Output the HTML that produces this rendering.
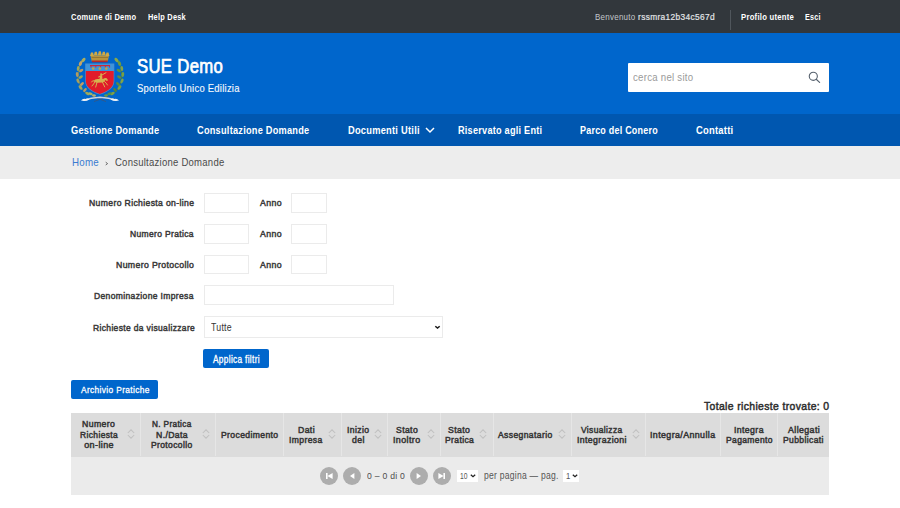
<!DOCTYPE html>
<html><head><meta charset="utf-8">
<style>
*{margin:0;padding:0;box-sizing:border-box}
html,body{width:900px;height:508px;overflow:hidden;background:#fff;font-family:"Liberation Sans",sans-serif}
.a{position:absolute}
.t{position:absolute;white-space:nowrap;transform-origin:0 0}
.inp{position:absolute;border:1px solid #ebebeb;background:#fff}
.circ{position:absolute;width:18px;height:18px;border-radius:50%;background:#adadad}
.sep{position:absolute;top:413px;height:43px;width:1px;background:#e6e6e6}
.sort{position:absolute;top:429px;width:8px;height:10px}
</style></head><body>
<div class="a" style="left:0;top:0;width:900px;height:33px;background:#32373c"></div>
<div class="a" style="left:0;top:33px;width:900px;height:81px;background:#0066cc"></div>
<div class="a" style="left:0;top:114px;width:900px;height:32px;background:#0057b0"></div>
<div class="a" style="left:0;top:146px;width:900px;height:33px;background:#ededed"></div>

<div class="a" style="left:730px;top:10px;width:1px;height:20px;background:#50565c"></div>

<!-- logo -->
<svg class="a" style="left:72px;top:46px" width="56" height="60" viewBox="0 0 56 60">
 <path d="M15 48.5 Q7 41 6 31 Q5.8 21 10.5 13" fill="none" stroke="#7a8a46" stroke-width="0.8"/>
 <path d="M41 48.5 Q49 41 50 31 Q50.2 21 45.5 13" fill="none" stroke="#4d7a3c" stroke-width="0.8"/>
 <g>
  <ellipse cx="11.5" cy="14" rx="1.5" ry="2.6" transform="rotate(40 11.5 14)" fill="#a9ad60"/>
  <ellipse cx="8.5" cy="17.5" rx="1.5" ry="2.6" transform="rotate(25 8.5 17.5)" fill="#c2a46a"/>
  <ellipse cx="6.2" cy="22.5" rx="1.4" ry="2.5" transform="rotate(5 6.2 22.5)" fill="#a0a85a"/>
  <ellipse cx="9.2" cy="24.5" rx="1.3" ry="2.3" transform="rotate(60 9.2 24.5)" fill="#b69a66"/>
  <ellipse cx="5.2" cy="28.5" rx="1.4" ry="2.5" transform="rotate(-8 5.2 28.5)" fill="#b09a62"/>
  <ellipse cx="8.8" cy="31" rx="1.3" ry="2.3" transform="rotate(60 8.8 31)" fill="#9aa85a"/>
  <ellipse cx="6" cy="35" rx="1.4" ry="2.5" transform="rotate(-25 6 35)" fill="#a8a05e"/>
  <ellipse cx="10" cy="38" rx="1.3" ry="2.3" transform="rotate(50 10 38)" fill="#c09a6a"/>
  <ellipse cx="8.5" cy="41.5" rx="1.4" ry="2.5" transform="rotate(-40 8.5 41.5)" fill="#a4a45c"/>
  <ellipse cx="13" cy="44" rx="1.3" ry="2.3" transform="rotate(40 13 44)" fill="#b49866"/>
  <ellipse cx="15.5" cy="47.5" rx="1.3" ry="2.4" transform="rotate(-60 15.5 47.5)" fill="#9ea85a"/>
 </g>
 <g>
  <ellipse cx="44.5" cy="14" rx="1.5" ry="2.6" transform="rotate(-40 44.5 14)" fill="#88a84a"/>
  <ellipse cx="47.5" cy="17.5" rx="1.5" ry="2.6" transform="rotate(-25 47.5 17.5)" fill="#6a9a44"/>
  <ellipse cx="49.8" cy="22.5" rx="1.4" ry="2.5" transform="rotate(-5 49.8 22.5)" fill="#82a448"/>
  <ellipse cx="46.8" cy="24.5" rx="1.3" ry="2.3" transform="rotate(-60 46.8 24.5)" fill="#5e9040"/>
  <ellipse cx="50.8" cy="28.5" rx="1.4" ry="2.5" transform="rotate(8 50.8 28.5)" fill="#76a046"/>
  <ellipse cx="47.2" cy="31" rx="1.3" ry="2.3" transform="rotate(-60 47.2 31)" fill="#5a8c40"/>
  <ellipse cx="50" cy="35" rx="1.4" ry="2.5" transform="rotate(25 50 35)" fill="#80a448"/>
  <ellipse cx="46" cy="38" rx="1.3" ry="2.3" transform="rotate(-50 46 38)" fill="#5a8a40"/>
  <ellipse cx="47.5" cy="41.5" rx="1.4" ry="2.5" transform="rotate(40 47.5 41.5)" fill="#7aa046"/>
  <ellipse cx="43" cy="44" rx="1.3" ry="2.3" transform="rotate(-40 43 44)" fill="#4f8240"/>
  <ellipse cx="40.5" cy="47.5" rx="1.3" ry="2.4" transform="rotate(60 40.5 47.5)" fill="#7ea048"/>
 </g>
 <!-- crown -->
 <path d="M18.5 9.5 L37 9.5 L35.8 15.2 L19.7 15.2 Z" fill="#b8943c"/>
 <g fill="#cfa945">
  <path d="M18 10 L19 6.5 L21 6.5 L22 10 Z"/><path d="M21.8 9.5 L22.8 5.8 L24.8 5.8 L25.8 9.5 Z"/><path d="M25.8 9.5 L26.8 5.3 L28.8 5.3 L29.8 9.5 Z"/><path d="M29.8 9.5 L30.8 5.8 L32.8 5.8 L33.8 9.5 Z"/><path d="M33.5 10 L34.5 6.5 L36.5 6.5 L37.5 10 Z"/>
 </g>
 <path d="M19.5 11.5 L36 11.5" stroke="#8d7030" stroke-width="0.8"/>
 <path d="M19.7 14.6 L35.8 14.6 L35.4 16.3 L20.1 16.3 Z" fill="#b22a2c"/>
 <!-- shield -->
 <path d="M13.2 17.6 L42.3 17.6 L42.3 35 Q42.2 44.2 27.8 48.6 Q13.3 44.2 13.2 35 Z" fill="#4a90d0"/>
 <path d="M13.8 25 L41.7 25 L41.7 35 Q41.6 43.6 27.8 47.9 Q13.9 43.6 13.8 35 Z" fill="#e11b2b"/>
 <path d="M14 18.3 L41.5 18.3 L41.5 25 L14 25 Z" fill="#3f95da"/>
 <path d="M18 19.6 L38 19.6" stroke="#c8283c" stroke-width="1.2"/>
 <path d="M19 19.5 L19 21.6 M23.8 19.5 L23.8 21.6 M28.6 19.5 L28.6 21.6 M33.4 19.5 L33.4 21.6 M37.6 19.5 L37.6 21.6" stroke="#c8283c" stroke-width="0.9"/>
 <circle cx="21.2" cy="22.6" r="1.3" fill="#c9a43e"/><circle cx="27.8" cy="22.6" r="1.3" fill="#c9a43e"/><circle cx="34.3" cy="22.6" r="1.3" fill="#c9a43e"/>
 <!-- horseman -->
 <g transform="translate(0.5 1.5)"><g fill="#d6b24e">
  <path d="M21 33.5 Q22.5 31.2 26 31.6 L30.5 31.6 Q32.5 30 34.2 30.8 L35.6 32.8 L34.2 33.4 L33 32.6 Q31.5 34.8 30 35 L24.5 35.2 Q22.5 35 21 33.5 Z"/>
  <path d="M27 31.8 L27.4 28.2 L29.6 27.8 L30 31.8 Z"/>
  <circle cx="28.6" cy="26.8" r="1"/>
 </g>
 <g fill="none" stroke="#d6b24e" stroke-width="1" stroke-linecap="round">
  <path d="M22.5 34 Q21.5 36.5 19.5 38.5 M24.5 34.8 L23.2 39.6 M30 34.6 L32.2 39.4 M32 34 Q34 35.5 35 37.5"/>
  <path d="M26 29.5 L33.5 25.2"/>
  <path d="M21 33.2 Q19.6 33 19 34.5"/>
 </g></g>
 <!-- ribbon -->
 <path d="M20 50.5 L34 55.5 M36 50.5 L22 55.5" fill="none" stroke="#3c5478" stroke-width="0.8"/>
 <path d="M11.5 54.2 Q19 51.6 28 51.2 Q37 51.6 44.5 54.2" fill="none" stroke="#c9d2dc" stroke-width="1.5"/>
 <path d="M9 54.6 Q11 52.2 13.5 53 Q15.5 51.8 17.5 53.4 Q14 55.6 9 54.6 Z" fill="#eef2f6"/>
 <path d="M47 54.6 Q45 52.2 42.5 53 Q40.5 51.8 38.5 53.4 Q42 55.6 47 54.6 Z" fill="#eef2f6"/>
 <ellipse cx="18.5" cy="47.8" rx="1.3" ry="2.2" transform="rotate(-70 18.5 47.8)" fill="#a8b060"/>
 <ellipse cx="22" cy="49.5" rx="1.2" ry="2" transform="rotate(-80 22 49.5)" fill="#b8b070"/>
 <ellipse cx="37.5" cy="47.8" rx="1.3" ry="2.2" transform="rotate(70 37.5 47.8)" fill="#5a9040"/>
 <ellipse cx="34" cy="49.5" rx="1.2" ry="2" transform="rotate(80 34 49.5)" fill="#6a9a44"/>
</svg>


<!-- search -->
<div class="a" style="left:627.5px;top:62.5px;width:201.5px;height:29.5px;background:#fff;border-radius:1px"></div>
<svg class="a" style="left:806px;top:70px" width="16" height="16" viewBox="0 0 16 16"><circle cx="7.3" cy="6.3" r="4.05" fill="none" stroke="#56616d" stroke-width="1.1"/><path d="M10.2 9.2 L13.6 12.4" stroke="#56616d" stroke-width="1.2" stroke-linecap="round"/></svg>

<!-- nav chevron -->
<svg class="a" style="left:423.6px;top:124.6px" width="12" height="10" viewBox="0 0 12 10"><path d="M2 3 L6 7 L10 3" fill="none" stroke="#fff" stroke-width="1.5"/></svg>

<!-- breadcrumb sep -->
<svg class="a" style="left:104px;top:161px" width="5" height="5" viewBox="0 0 5 5"><path d="M1.7 1.2 L3.6 2.6 L1.7 4" fill="none" stroke="#5a5a5a" stroke-width="0.9"/></svg>

<!-- form inputs -->
<div class="inp" style="left:204px;top:193px;width:45px;height:19.5px"></div>
<div class="inp" style="left:290.5px;top:193px;width:36.5px;height:19.5px"></div>
<div class="inp" style="left:204px;top:224px;width:45px;height:19.5px"></div>
<div class="inp" style="left:290.5px;top:224px;width:36.5px;height:19.5px"></div>
<div class="inp" style="left:204px;top:254.5px;width:45px;height:19.5px"></div>
<div class="inp" style="left:290.5px;top:254.5px;width:36.5px;height:19.5px"></div>
<div class="inp" style="left:204px;top:285.3px;width:190px;height:19.5px"></div>
<div class="inp" style="left:204px;top:316.4px;width:239px;height:21.2px"></div>
<svg class="a" style="left:432.5px;top:323px" width="9" height="8" viewBox="0 0 9 8"><path d="M2.3 3.2 L4.5 5.1 L6.7 3.2" fill="none" stroke="#1a1a1a" stroke-width="1.5"/></svg>

<!-- buttons -->
<div class="a" style="left:203px;top:349.1px;width:65.8px;height:19.2px;background:#0066cc;border-radius:2px"></div>
<div class="a" style="left:71px;top:380px;width:87px;height:19px;background:#0066cc;border-radius:2px"></div>

<!-- table -->
<div class="a" style="left:71px;top:413px;width:758px;height:43.5px;background:#dcdcdc"></div>
<div class="a" style="left:71px;top:456.5px;width:758px;height:38px;background:#ebebeb"></div>
<div class="sep" style="left:140.1px"></div>
<div class="sep" style="left:215.1px"></div>
<div class="sep" style="left:283.1px"></div>
<div class="sep" style="left:340.8px"></div>
<div class="sep" style="left:386.9px"></div>
<div class="sep" style="left:439.5px"></div>
<div class="sep" style="left:492.7px"></div>
<div class="sep" style="left:570.8px"></div>
<div class="sep" style="left:644.7px"></div>
<div class="sep" style="left:719.7px"></div>
<div class="sep" style="left:776.8px"></div>
<svg class="sort" style="left:127.2px" width="8" height="10" viewBox="0 0 8 10"><path d="M0.8 4 L4 0.8 L7.2 4 M0.8 6 L4 9.2 L7.2 6" fill="none" stroke="#c0c0c0" stroke-width="1.05"/></svg>
<svg class="sort" style="left:202.0px" width="8" height="10" viewBox="0 0 8 10"><path d="M0.8 4 L4 0.8 L7.2 4 M0.8 6 L4 9.2 L7.2 6" fill="none" stroke="#c0c0c0" stroke-width="1.05"/></svg>
<svg class="sort" style="left:327.6px" width="8" height="10" viewBox="0 0 8 10"><path d="M0.8 4 L4 0.8 L7.2 4 M0.8 6 L4 9.2 L7.2 6" fill="none" stroke="#c0c0c0" stroke-width="1.05"/></svg>
<svg class="sort" style="left:374.2px" width="8" height="10" viewBox="0 0 8 10"><path d="M0.8 4 L4 0.8 L7.2 4 M0.8 6 L4 9.2 L7.2 6" fill="none" stroke="#c0c0c0" stroke-width="1.05"/></svg>
<svg class="sort" style="left:426.6px" width="8" height="10" viewBox="0 0 8 10"><path d="M0.8 4 L4 0.8 L7.2 4 M0.8 6 L4 9.2 L7.2 6" fill="none" stroke="#c0c0c0" stroke-width="1.05"/></svg>
<svg class="sort" style="left:479.4px" width="8" height="10" viewBox="0 0 8 10"><path d="M0.8 4 L4 0.8 L7.2 4 M0.8 6 L4 9.2 L7.2 6" fill="none" stroke="#c0c0c0" stroke-width="1.05"/></svg>
<svg class="sort" style="left:558.2px" width="8" height="10" viewBox="0 0 8 10"><path d="M0.8 4 L4 0.8 L7.2 4 M0.8 6 L4 9.2 L7.2 6" fill="none" stroke="#c0c0c0" stroke-width="1.05"/></svg>
<svg class="sort" style="left:631.6px" width="8" height="10" viewBox="0 0 8 10"><path d="M0.8 4 L4 0.8 L7.2 4 M0.8 6 L4 9.2 L7.2 6" fill="none" stroke="#c0c0c0" stroke-width="1.05"/></svg>

<!-- pagination -->
<div class="circ" style="left:320px;top:466.5px"></div>
<div class="circ" style="left:343px;top:466.5px"></div>
<div class="circ" style="left:410.4px;top:466.5px"></div>
<div class="circ" style="left:433px;top:466.5px"></div>
<svg class="a" style="left:320px;top:466.5px" width="18" height="18" viewBox="0 0 18 18"><rect x="6" y="6" width="1.6" height="6" fill="#fff"/><path d="M7.4 9 L12.6 6 L12.6 12 Z" fill="#fff"/></svg>
<svg class="a" style="left:343px;top:466.5px" width="18" height="18" viewBox="0 0 18 18"><path d="M7 9 L11.4 6 L11.4 12 Z" fill="#fff"/></svg>
<svg class="a" style="left:410.4px;top:466.5px" width="18" height="18" viewBox="0 0 18 18"><path d="M11 9 L6.6 6 L6.6 12 Z" fill="#fff"/></svg>
<svg class="a" style="left:433px;top:466.5px" width="18" height="18" viewBox="0 0 18 18"><path d="M10.6 9 L5.4 6 L5.4 12 Z" fill="#fff"/><rect x="10.4" y="6" width="1.6" height="6" fill="#fff"/></svg>
<div class="a" style="left:457px;top:470px;width:21px;height:12px;background:#fff"></div>
<svg class="a" style="left:468.5px;top:471px" width="8" height="8" viewBox="0 0 8 8"><path d="M1.8 3.8 L4 5.7 L6.2 3.8" fill="none" stroke="#222" stroke-width="1.3"/></svg>
<div class="a" style="left:562.7px;top:470px;width:16.3px;height:12px;background:#fff"></div>
<svg class="a" style="left:570.8px;top:471px" width="8" height="8" viewBox="0 0 8 8"><path d="M1.8 3.8 L4 5.7 L6.2 3.8" fill="none" stroke="#222" stroke-width="1.3"/></svg>

<div class="t" style="left:70.90px;top:12.00px;font-size:9.30px;line-height:11px;color:#ffffff;font-weight:700;letter-spacing:0.3px;transform:scaleX(0.810)">Comune di Demo</div>
<div class="t" style="left:147.90px;top:12.00px;font-size:9.30px;line-height:11px;color:#ffffff;font-weight:700;letter-spacing:0.3px;transform:scaleX(0.797)">Help Desk</div>
<div class="t" style="left:595.00px;top:11.90px;font-size:9.30px;line-height:11px;color:#c3c6ca;letter-spacing:0.3px;transform:scaleX(0.857)">Benvenuto</div>
<div class="t" style="left:637.70px;top:11.90px;font-size:9.30px;line-height:11px;color:#e4e6e8;-webkit-text-stroke:0.2px currentColor;letter-spacing:0.4px;transform:scaleX(0.896)">rssmra12b34c567d</div>
<div class="t" style="left:740.60px;top:11.90px;font-size:9.30px;line-height:11px;color:#ffffff;font-weight:700;letter-spacing:0.3px;transform:scaleX(0.828)">Profilo utente</div>
<div class="t" style="left:805.00px;top:11.90px;font-size:9.30px;line-height:11px;color:#ffffff;font-weight:700;letter-spacing:0.3px;transform:scaleX(0.772)">Esci</div>
<div class="t" style="left:137.00px;top:54.80px;font-size:19.42px;line-height:23px;color:#ffffff;-webkit-text-stroke:0.7px currentColor;letter-spacing:0.4px;transform:scaleX(0.860)">SUE Demo</div>
<div class="t" style="left:137.00px;top:81.60px;font-size:11.16px;line-height:13px;color:#f4f8fc;-webkit-text-stroke:0.15px currentColor;letter-spacing:0.3px;transform:scaleX(0.847)">Sportello Unico Edilizia</div>
<div class="t" style="left:633.20px;top:69.90px;font-size:11.59px;line-height:14px;color:#9a9a9a;letter-spacing:0.3px;transform:scaleX(0.834)">cerca nel sito</div>
<div class="t" style="left:71.10px;top:122.60px;font-size:11.30px;line-height:14px;color:#ffffff;font-weight:700;letter-spacing:0.3px;transform:scaleX(0.820)">Gestione Domande</div>
<div class="t" style="left:197.00px;top:122.60px;font-size:11.30px;line-height:14px;color:#ffffff;font-weight:700;letter-spacing:0.3px;transform:scaleX(0.814)">Consultazione Domande</div>
<div class="t" style="left:348.00px;top:122.60px;font-size:11.30px;line-height:14px;color:#ffffff;font-weight:700;letter-spacing:0.3px;transform:scaleX(0.822)">Documenti Utili</div>
<div class="t" style="left:458.30px;top:122.60px;font-size:11.30px;line-height:14px;color:#ffffff;font-weight:700;letter-spacing:0.3px;transform:scaleX(0.809)">Riservato agli Enti</div>
<div class="t" style="left:580.30px;top:122.60px;font-size:11.30px;line-height:14px;color:#ffffff;font-weight:700;letter-spacing:0.3px;transform:scaleX(0.792)">Parco del Conero</div>
<div class="t" style="left:696.00px;top:122.60px;font-size:11.30px;line-height:14px;color:#ffffff;font-weight:700;letter-spacing:0.3px;transform:scaleX(0.831)">Contatti</div>
<div class="t" style="left:71.70px;top:155.10px;font-size:11.74px;line-height:14px;color:#3a7bd0;letter-spacing:0.3px;transform:scaleX(0.831)">Home</div>
<div class="t" style="left:115.00px;top:155.10px;font-size:11.74px;line-height:14px;color:#4a4a4a;letter-spacing:0.3px;transform:scaleX(0.812)">Consultazione Domande</div>
<div class="t" style="left:89.20px;top:197.30px;font-size:9.70px;line-height:12px;color:#3a3a3a;-webkit-text-stroke:0.5px currentColor;letter-spacing:0.4px;transform:scaleX(0.890)">Numero Richiesta on-line</div>
<div class="t" style="left:259.80px;top:197.30px;font-size:9.70px;line-height:12px;color:#3a3a3a;-webkit-text-stroke:0.5px currentColor;letter-spacing:0.4px;transform:scaleX(0.905)">Anno</div>
<div class="t" style="left:129.70px;top:228.10px;font-size:9.70px;line-height:12px;color:#3a3a3a;-webkit-text-stroke:0.5px currentColor;letter-spacing:0.4px;transform:scaleX(0.877)">Numero Pratica</div>
<div class="t" style="left:259.80px;top:228.10px;font-size:9.70px;line-height:12px;color:#3a3a3a;-webkit-text-stroke:0.5px currentColor;letter-spacing:0.4px;transform:scaleX(0.905)">Anno</div>
<div class="t" style="left:116.30px;top:258.90px;font-size:9.70px;line-height:12px;color:#3a3a3a;-webkit-text-stroke:0.5px currentColor;letter-spacing:0.4px;transform:scaleX(0.899)">Numero Protocollo</div>
<div class="t" style="left:259.80px;top:258.90px;font-size:9.70px;line-height:12px;color:#3a3a3a;-webkit-text-stroke:0.5px currentColor;letter-spacing:0.4px;transform:scaleX(0.905)">Anno</div>
<div class="t" style="left:94.00px;top:289.90px;font-size:9.70px;line-height:12px;color:#3a3a3a;-webkit-text-stroke:0.5px currentColor;letter-spacing:0.4px;transform:scaleX(0.880)">Denominazione Impresa</div>
<div class="t" style="left:92.50px;top:321.60px;font-size:9.70px;line-height:12px;color:#3a3a3a;-webkit-text-stroke:0.5px currentColor;letter-spacing:0.4px;transform:scaleX(0.876)">Richieste da visualizzare</div>
<div class="t" style="left:211.10px;top:321.00px;font-size:10.43px;line-height:13px;color:#333333;letter-spacing:0.3px;transform:scaleX(0.840)">Tutte</div>
<div class="t" style="left:212.90px;top:353.50px;font-size:10.00px;line-height:12px;color:#ffffff;-webkit-text-stroke:0.3px currentColor;letter-spacing:0.4px;transform:scaleX(0.827)">Applica filtri</div>
<div class="t" style="left:80.80px;top:383.80px;font-size:9.71px;line-height:12px;color:#ffffff;-webkit-text-stroke:0.3px currentColor;letter-spacing:0.4px;transform:scaleX(0.863)">Archivio Pratiche</div>
<div class="t" style="left:704.20px;top:398.70px;font-size:11.52px;line-height:14px;color:#2e2e2e;-webkit-text-stroke:0.5px currentColor;letter-spacing:0.4px;transform:scaleX(0.904)">Totale richieste trovate: 0</div>
<div class="t" style="left:82.40px;top:419.10px;font-size:9.00px;line-height:11px;color:#363636;-webkit-text-stroke:0.5px currentColor;letter-spacing:0.4px;transform:scaleX(0.968)">Numero</div>
<div class="t" style="left:80.00px;top:429.80px;font-size:9.00px;line-height:11px;color:#363636;-webkit-text-stroke:0.5px currentColor;letter-spacing:0.4px;transform:scaleX(0.938)">Richiesta</div>
<div class="t" style="left:84.20px;top:440.00px;font-size:9.00px;line-height:11px;color:#363636;-webkit-text-stroke:0.5px currentColor;letter-spacing:0.4px;transform:scaleX(1.000)">on-line</div>
<div class="t" style="left:152.00px;top:419.10px;font-size:9.00px;line-height:11px;color:#363636;-webkit-text-stroke:0.5px currentColor;letter-spacing:0.4px;transform:scaleX(0.912)">N. Pratica</div>
<div class="t" style="left:155.60px;top:429.80px;font-size:9.00px;line-height:11px;color:#363636;-webkit-text-stroke:0.5px currentColor;letter-spacing:0.4px;transform:scaleX(0.963)">N./Data</div>
<div class="t" style="left:150.80px;top:440.00px;font-size:9.00px;line-height:11px;color:#363636;-webkit-text-stroke:0.5px currentColor;letter-spacing:0.4px;transform:scaleX(0.945)">Protocollo</div>
<div class="t" style="left:221.20px;top:430.00px;font-size:9.00px;line-height:11px;color:#363636;-webkit-text-stroke:0.5px currentColor;letter-spacing:0.4px;transform:scaleX(0.953)">Procedimento</div>
<div class="t" style="left:297.50px;top:424.70px;font-size:9.00px;line-height:11px;color:#363636;-webkit-text-stroke:0.5px currentColor;letter-spacing:0.4px;transform:scaleX(0.965)">Dati</div>
<div class="t" style="left:288.80px;top:435.00px;font-size:9.00px;line-height:11px;color:#363636;-webkit-text-stroke:0.5px currentColor;letter-spacing:0.4px;transform:scaleX(0.951)">Impresa</div>
<div class="t" style="left:346.80px;top:424.70px;font-size:9.00px;line-height:11px;color:#363636;-webkit-text-stroke:0.5px currentColor;letter-spacing:0.4px;transform:scaleX(0.956)">Inizio</div>
<div class="t" style="left:351.60px;top:435.00px;font-size:9.00px;line-height:11px;color:#363636;-webkit-text-stroke:0.5px currentColor;letter-spacing:0.4px;transform:scaleX(0.968)">del</div>
<div class="t" style="left:396.00px;top:424.70px;font-size:9.00px;line-height:11px;color:#363636;-webkit-text-stroke:0.5px currentColor;letter-spacing:0.4px;transform:scaleX(0.960)">Stato</div>
<div class="t" style="left:393.30px;top:435.00px;font-size:9.00px;line-height:11px;color:#363636;-webkit-text-stroke:0.5px currentColor;letter-spacing:0.4px;transform:scaleX(0.989)">Inoltro</div>
<div class="t" style="left:448.40px;top:424.70px;font-size:9.00px;line-height:11px;color:#363636;-webkit-text-stroke:0.5px currentColor;letter-spacing:0.4px;transform:scaleX(0.969)">Stato</div>
<div class="t" style="left:444.90px;top:435.00px;font-size:9.00px;line-height:11px;color:#363636;-webkit-text-stroke:0.5px currentColor;letter-spacing:0.4px;transform:scaleX(0.947)">Pratica</div>
<div class="t" style="left:498.00px;top:430.00px;font-size:9.00px;line-height:11px;color:#363636;-webkit-text-stroke:0.5px currentColor;letter-spacing:0.4px;transform:scaleX(0.952)">Assegnatario</div>
<div class="t" style="left:580.70px;top:424.70px;font-size:9.00px;line-height:11px;color:#363636;-webkit-text-stroke:0.5px currentColor;letter-spacing:0.4px;transform:scaleX(0.937)">Visualizza</div>
<div class="t" style="left:576.60px;top:435.00px;font-size:9.00px;line-height:11px;color:#363636;-webkit-text-stroke:0.5px currentColor;letter-spacing:0.4px;transform:scaleX(0.970)">Integrazioni</div>
<div class="t" style="left:650.30px;top:430.00px;font-size:9.00px;line-height:11px;color:#363636;-webkit-text-stroke:0.5px currentColor;letter-spacing:0.4px;transform:scaleX(0.984)">Integra/Annulla</div>
<div class="t" style="left:734.40px;top:424.70px;font-size:9.00px;line-height:11px;color:#363636;-webkit-text-stroke:0.5px currentColor;letter-spacing:0.4px;transform:scaleX(0.970)">Integra</div>
<div class="t" style="left:725.90px;top:435.00px;font-size:9.00px;line-height:11px;color:#363636;-webkit-text-stroke:0.5px currentColor;letter-spacing:0.4px;transform:scaleX(0.945)">Pagamento</div>
<div class="t" style="left:787.50px;top:424.70px;font-size:9.00px;line-height:11px;color:#363636;-webkit-text-stroke:0.5px currentColor;letter-spacing:0.4px;transform:scaleX(0.981)">Allegati</div>
<div class="t" style="left:782.90px;top:435.00px;font-size:9.00px;line-height:11px;color:#363636;-webkit-text-stroke:0.5px currentColor;letter-spacing:0.4px;transform:scaleX(0.950)">Pubblicati</div>
<div class="t" style="left:366.70px;top:469.90px;font-size:9.86px;line-height:12px;color:#4d4d4d;letter-spacing:0.3px;transform:scaleX(0.876)">0 – 0 di 0</div>
<div class="t" style="left:483.50px;top:469.70px;font-size:10.00px;line-height:12px;color:#555555;letter-spacing:0.3px;transform:scaleX(0.855)">per pagina — pag.</div>
<div class="t" style="left:460.00px;top:470.70px;font-size:8.70px;line-height:10px;color:#555555;transform:scaleX(0.773)">10</div>
<div class="t" style="left:566.00px;top:470.70px;font-size:8.70px;line-height:10px;color:#555555;transform:scaleX(0.880)">1</div>
</body></html>
